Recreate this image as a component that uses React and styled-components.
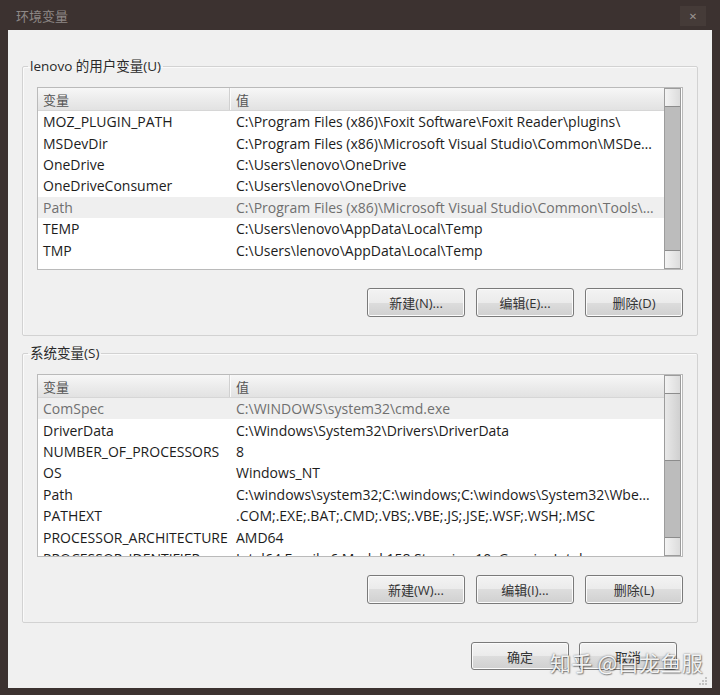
import React from 'react';
import styled, { createGlobalStyle } from 'styled-components';

const GlobalStyle = createGlobalStyle`
  html, body { margin: 0; padding: 0; background: #3c3230; }
  body { font-family: "Open Sans", "Noto Sans CJK SC", sans-serif; }
  * { box-sizing: border-box; }
`;

const Window = styled.div`
  position: relative;
  width: 720px;
  height: 695px;
  background: #3c3230;
  display: flex;
  flex-direction: column;
  overflow: hidden;
`;

const TitleBar = styled.div`
  height: 30px;
  flex: none;
  display: flex;
  align-items: center;
  justify-content: space-between;
  padding: 0 14px 0 16px;
`;

const Title = styled.div`
  color: #8e8886;
  font-size: 13px;
  font-family: "Noto Sans CJK SC", sans-serif;
`;

const CloseButton = styled.div`
  width: 26px;
  height: 20px;
  margin-top: 2px;
  background: #453b38;
  color: #9c9593;
  font-size: 10px;
  font-family: "DejaVu Sans", sans-serif;
  display: flex;
  align-items: center;
  justify-content: center;
`;

const Client = styled.div`
  flex: 1;
  margin: 0 8px 7px 8px;
  background: #f0f0f0;
  padding: 28px 14px 0 14px;
  display: flex;
  flex-direction: column;
`;

const Group = styled.fieldset`
  margin: ${p => (p.$first ? '0' : '9px')} 0 0 0;
  padding: 13px 14px 18px 14px;
  border: 1px solid #d2d2d2;
  border-radius: 2px;
  box-shadow: inset 1px 1px 0 #fafafa;
  min-width: 0;
`;

const Legend = styled.legend`
  margin-left: -9px;
  padding: 0 2px;
  font-size: 13.5px;
  line-height: 16px;
  color: #2a2a2a;
`;

const ListBox = styled.div`
  height: 183px;
  border: 1px solid #bababa;
  background: #ffffff;
  display: flex;
  overflow: hidden;
`;

const Table = styled.div`
  flex: 1;
  min-width: 0;
  display: flex;
  flex-direction: column;
  overflow: hidden;
`;

const HeaderRow = styled.div`
  height: 23px;
  flex: none;
  display: grid;
  grid-template-columns: 192px 1fr;
  background: linear-gradient(#f7f7f7, #ececec 50%, #e2e2e2);
  border-bottom: 1px solid #d6d6d6;
  color: #555555;
  font-size: 13px;
  font-family: "Noto Sans CJK SC", sans-serif;
`;

const HeaderCell = styled.div`
  display: flex;
  align-items: center;
  padding-left: ${p => (p.$value ? '6px' : '5px')};
  border-right: ${p => (p.$value ? 'none' : '1px solid #d0d0d0')};
  box-shadow: ${p => (p.$value ? 'none' : '1px 0 0 #fbfbfb')};
`;

const Row = styled.div`
  height: 21.4px;
  flex: none;
  display: grid;
  grid-template-columns: 192px 1fr;
  align-items: center;
  font-size: 14px;
  color: ${p => (p.$selected ? '#707070' : '#1c1c1c')};
  background: ${p => (p.$selected ? '#efefef' : 'transparent')};
`;

const Cell = styled.div`
  padding-left: ${p => (p.$value ? '6px' : '5px')};
  padding-right: ${p => (p.$value ? '9px' : '2px')};
  white-space: nowrap;
  overflow: hidden;
  text-overflow: ellipsis;
`;

const ScrollBar = styled.div`
  width: 17px;
  flex: none;
  margin-right: 1px;
  display: flex;
  flex-direction: column;
  background: #bcbcbc;
  border: 1px solid #9c9c9c;
`;

const ScrollButton = styled.div`
  height: 18px;
  flex: none;
  background: linear-gradient(90deg, #f3f3f3, #dcdcdc);
  border-top: ${p => (p.$bottom ? '1px solid #8c8c8c' : 'none')};
  border-bottom: ${p => (p.$bottom ? 'none' : '1px solid #8c8c8c')};
`;

const Thumb = styled.div`
  flex: none;
  background: linear-gradient(90deg, #e8e8e8, #d0d0d0);
  border-bottom: 1px solid #8c8c8c;
`;

const Track = styled.div`
  flex: 1;
`;

const ButtonRow = styled.div`
  display: flex;
  justify-content: flex-end;
  gap: ${p => (p.$footer ? '10px' : '11px')};
  margin-top: ${p => (p.$footer ? '19px' : '18px')};
  margin-right: ${p => (p.$footer ? '21px' : '0')};
`;

const Button = styled.button`
  width: 98px;
  height: ${p => (p.$short ? '28px' : '29px')};
  padding: 0;
  border: 1px solid #7a7a7a;
  border-radius: 3px;
  background: linear-gradient(#f3f3f3, #ebebeb 50%, #dddddd 50%, #d0d0d0);
  box-shadow: inset 0 0 0 1px #fbfbfb;
  color: #333333;
  font-family: "Open Sans", "Noto Sans CJK SC", sans-serif;
  font-size: 13px;
  display: flex;
  align-items: center;
  justify-content: center;
`;

const Watermark = styled.div`
  position: absolute;
  right: 17px;
  bottom: 18px;
  font-family: "Noto Sans CJK SC", sans-serif;
  font-size: 21px;
  letter-spacing: 0.3px;
  color: rgba(255, 255, 255, 0.92);
  text-shadow: 0 0 2px rgba(0, 0, 0, 0.55), 1px 1px 1px rgba(0, 0, 0, 0.35);
  white-space: nowrap;
`;

const Grip = styled.svg`
  position: absolute;
  right: 12px;
  bottom: 9px;
`;

const userVars = [
  ['MOZ_PLUGIN_PATH', 'C:\\Program Files (x86)\\Foxit Software\\Foxit Reader\\plugins\\'],
  ['MSDevDir', 'C:\\Program Files (x86)\\Microsoft Visual Studio\\Common\\MSDev98'],
  ['OneDrive', 'C:\\Users\\lenovo\\OneDrive'],
  ['OneDriveConsumer', 'C:\\Users\\lenovo\\OneDrive'],
  ['Path', 'C:\\Program Files (x86)\\Microsoft Visual Studio\\Common\\Tools\\WinNT;C:\\Program Files', true],
  ['TEMP', 'C:\\Users\\lenovo\\AppData\\Local\\Temp'],
  ['TMP', 'C:\\Users\\lenovo\\AppData\\Local\\Temp'],
];

const sysVars = [
  ['ComSpec', 'C:\\WINDOWS\\system32\\cmd.exe', true],
  ['DriverData', 'C:\\Windows\\System32\\Drivers\\DriverData'],
  ['NUMBER_OF_PROCESSORS', '8'],
  ['OS', 'Windows_NT'],
  ['Path', 'C:\\windows\\system32;C:\\windows;C:\\windows\\System32\\Wbem;C:\\windows\\System32'],
  ['PATHEXT', '.COM;.EXE;.BAT;.CMD;.VBS;.VBE;.JS;.JSE;.WSF;.WSH;.MSC'],
  ['PROCESSOR_ARCHITECTURE', 'AMD64'],
  ['PROCESSOR_IDENTIFIER', 'Intel64 Family 6 Model 158 Stepping 10, GenuineIntel'],
];

function VarList({ rows, thumb }) {
  return (
    <ListBox>
      <Table>
        <HeaderRow>
          <HeaderCell>变量</HeaderCell>
          <HeaderCell $value>值</HeaderCell>
        </HeaderRow>
        {rows.map(([name, value, sel], i) => (
          <Row key={i} $selected={sel}>
            <Cell>{name}</Cell>
            <Cell $value>{value}</Cell>
          </Row>
        ))}
      </Table>
      <ScrollBar>
        <ScrollButton />
        {thumb ? <Thumb style={{ height: thumb }} /> : null}
        <Track />
        <ScrollButton $bottom />
      </ScrollBar>
    </ListBox>
  );
}

export default function App() {
  return (
    <>
      <GlobalStyle />
      <Window>
        <TitleBar>
          <Title>环境变量</Title>
          <CloseButton>✕</CloseButton>
        </TitleBar>
        <Client>
          <Group $first>
            <Legend>lenovo 的用户变量(U)</Legend>
            <VarList rows={userVars} />
            <ButtonRow>
              <Button>新建(N)...</Button>
              <Button>编辑(E)...</Button>
              <Button>删除(D)</Button>
            </ButtonRow>
          </Group>
          <Group>
            <Legend>系统变量(S)</Legend>
            <VarList rows={sysVars} thumb={67} />
            <ButtonRow>
              <Button>新建(W)...</Button>
              <Button>编辑(I)...</Button>
              <Button>删除(L)</Button>
            </ButtonRow>
          </Group>
          <ButtonRow $footer>
            <Button $short>确定</Button>
            <Button $short>取消</Button>
          </ButtonRow>
        </Client>
        <Watermark>知乎 @白龙鱼服</Watermark>
        <Grip width="10" height="10" viewBox="0 0 10 10">
          {[[8, 2], [8, 5], [5, 5], [8, 8], [5, 8], [2, 8]].map(([x, y], i) => (
            <rect key={i} x={x - 1} y={y - 1} width="2" height="2" fill="#c4c4c4" />
          ))}
        </Grip>
      </Window>
    </>
  );
}
